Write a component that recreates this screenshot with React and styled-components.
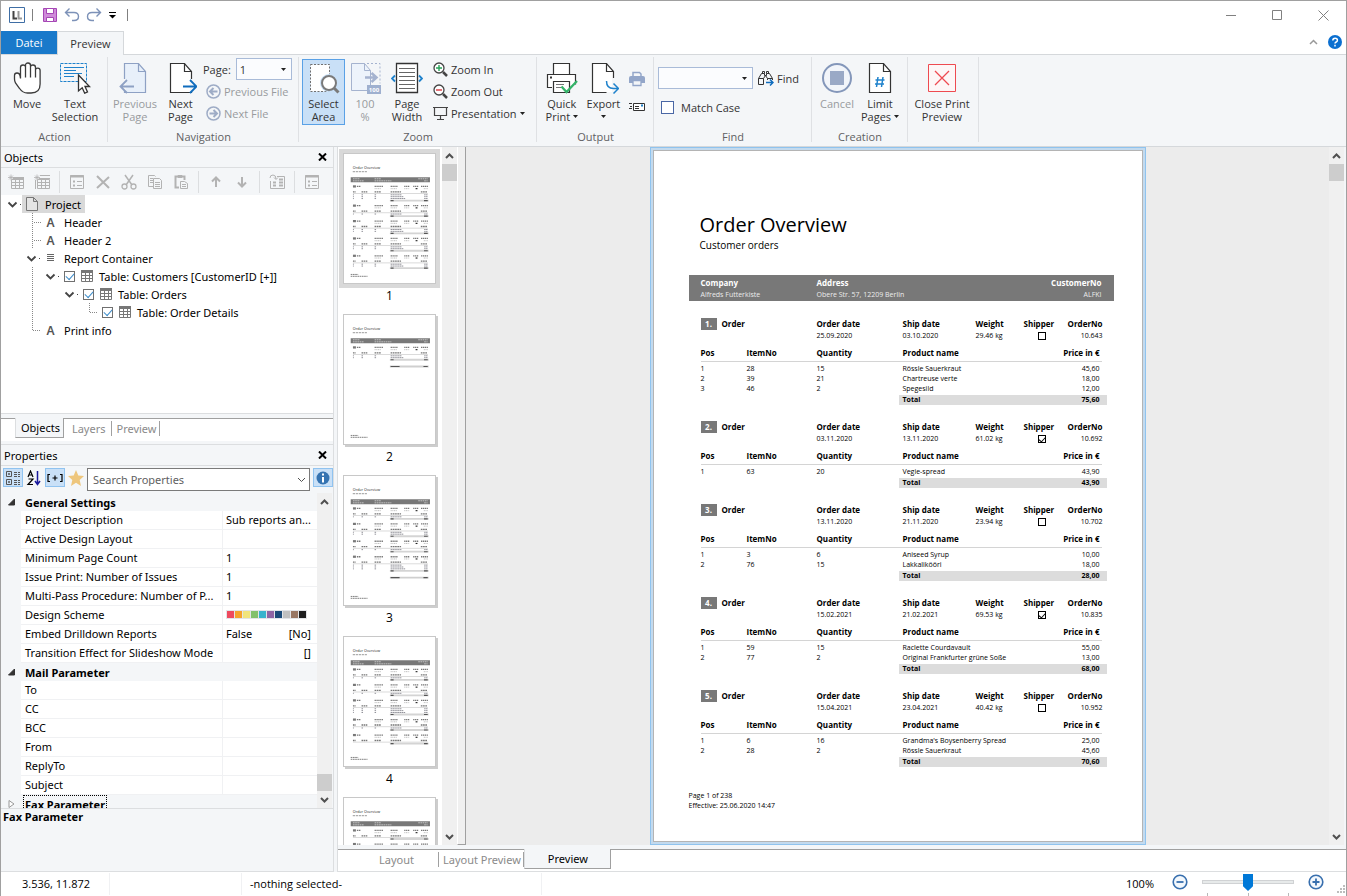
import React, { useState } from 'react';
import styled, { createGlobalStyle } from 'styled-components';

const GlobalStyle = createGlobalStyle`
  * {
    box-sizing: border-box;
  }

  body {
    margin: 0;
    background-color: white;
    color: black;
    font-family: 'Open Sans', 'Noto Sans', sans-serif;
    font-size: 11px;
    line-height: 13px;
  }

  button, input, select {
    font: inherit;
    color: inherit;
    margin: 0;
    padding: 0;
    border: none;
    background: none;
  }

  svg {
    display: block;
    flex: none;
  }
`;

const Window = styled.div`
  display: flex;
  flex-direction: column;
  height: 100vh;
  overflow: hidden;
  border: 1px solid #a0a0a0;
  border-bottom: none;
`;

/* title bar */

const TitleBar = styled.header`
  display: flex;
  align-items: center;
  flex: none;
  height: 30px;
  padding: 0 6px 2px 8px;
`;

const QuickButton = styled.button`
  display: flex;
  align-items: center;
  justify-content: center;
  width: ${props => props.$width || 22}px;
  height: 20px;
`;

const QuickSeparator = styled.div`
  width: 1px;
  height: 12px;
  margin: 0 6px 0 7px;
  background-color: #808080;
`;

const WindowButton = styled.button`
  display: flex;
  align-items: center;
  justify-content: center;
  width: 46px;
  height: 28px;
`;

const WindowButtons = styled.div`
  display: flex;
  margin-left: auto;
  margin-right: -6px;
`;

const MenuBar = styled.div`
  display: flex;
  flex: none;
  height: 24px;
  border-bottom: 1px solid #d5d8db;
`;

const FileTab = styled.button`
  width: 56px;
  background-color: #1979ca;
  color: white;
`;

const RibbonTab = styled.button`
  width: 67px;
  height: 24px;
  padding-bottom: 1px;
  background-color: #f4f6f8;
  border: 1px solid #d5d8db;
  border-bottom: none;
  color: #333;
`;

const MenuRight = styled.div`
  display: flex;
  align-items: center;
  gap: 10px;
  margin-left: auto;
  padding: 0 4px 2px 0;
`;

/* ribbon */

const Ribbon = styled.div`
  display: flex;
  flex: none;
  height: 92px;
  background-color: #f4f6f8;
  border-bottom: 1px solid #d5d8db;
`;

const Group = styled.section`
  display: flex;
  flex-direction: column;
  width: ${props => props.$width}px;
  padding: 4px 3px 0;
  position: relative;

  &::after {
    content: '';
    position: absolute;
    right: 0;
    top: 2px;
    bottom: 4px;
    width: 1px;
    background-color: #dfe1e4;
  }
`;

const GroupBody = styled.div`
  display: flex;
  height: 66px;
`;

const GroupLabel = styled.div`
  margin-top: 5px;
  text-align: center;
  color: #5f6163;
`;

const BigButton = styled.button`
  display: flex;
  flex-direction: column;
  align-items: center;
  width: ${props => props.$width}px;
  height: 66px;
  padding-top: 2px;
  border: 1px solid ${props => (props.$active ? '#5aa1e6' : 'transparent')};
  background-color: ${props => (props.$active ? '#c9e0f7' : 'transparent')};
  color: ${props => (props.disabled ? '#989b9e' : '#333')};
  white-space: nowrap;

  & > svg {
    margin-bottom: 3px;
  }
`;

const ButtonLine = styled.span`
  display: flex;
  align-items: center;
  gap: 3px;
  min-height: 13px;
`;

const SmallColumn = styled.div`
  display: flex;
  flex-direction: column;
  flex: 1;
  margin-top: -1px;
  padding-left: ${props => props.$indent || 0}px;
`;

const SmallRow = styled.div`
  display: flex;
  align-items: center;
  gap: 5px;
  height: ${props => props.$height || 22}px;
  color: #333;
`;

const SmallButton = styled.button`
  display: flex;
  align-items: center;
  gap: 3px;
  height: 22px;
  padding-left: ${props => props.$inset || 0}px;
  color: ${props => (props.disabled ? '#989b9e' : '#333')};
  white-space: nowrap;
`;

const IconColumn = styled.div`
  display: flex;
  flex-direction: column;
  align-items: center;
  justify-content: space-around;
  width: 28px;
  padding: 6px 0 4px;
`;

const SelectWrap = styled.div`
  display: flex;
  align-items: center;
  width: ${props => props.$width}px;
  height: 22px;
  border: 1px solid #a9bbd8;
  background-color: #fbfcfe;

  & > select {
    appearance: none;
    flex: 1;
    min-width: 0;
    height: 20px;
    padding-left: 3px;
  }

  & > svg {
    margin: 0 5px 0 -12px;
    pointer-events: none;
  }
`;

const MatchLabel = styled.label`
  display: flex;
  align-items: center;
  gap: 7px;
  padding-left: 3px;
  color: #333;

  & > input {
    appearance: none;
    width: 13px;
    height: 13px;
    border: 1px solid #4a67a5;
    background-color: white;
  }
`;

/* dock on the left */

const Main = styled.main`
  display: flex;
  flex: 1;
  min-height: 0;
  background-color: #f4f6f8;
`;

const Dock = styled.aside`
  display: flex;
  flex-direction: column;
  flex: none;
  width: 333px;
  border-right: 1px solid #dcdee0;
  font-family: 'Noto Sans', 'Open Sans', sans-serif;
`;

const PanelHeader = styled.div`
  display: flex;
  align-items: center;
  justify-content: space-between;
  flex: none;
  height: 21px;
  padding: 0 6px 0 3px;
  border-bottom: 1px solid #dcdee0;
`;

const ObjectToolbar = styled.div`
  display: flex;
  align-items: center;
  flex: none;
  height: 27px;
  padding-left: 2px;

  & > button {
    display: flex;
    align-items: center;
    justify-content: center;
    width: 26px;
    height: 24px;
  }

  & > hr {
    width: 1px;
    height: 22px;
    margin: 0 4px;
    border: none;
    background-color: #dcdee0;
  }
`;

const Tree = styled.div`
  flex: 1;
  min-height: 0;
  padding-left: 2px;
  border-bottom: 1px solid #dcdee0;
  background-color: white;
`;

const TreeRow = styled.div`
  display: flex;
  align-items: center;
  height: 18px;
`;

const TreeSlot = styled.div`
  display: flex;
  align-items: center;
  justify-content: center;
  flex: none;
  width: ${props => props.$width || 19}px;
  height: 18px;
`;

const TreeLabel = styled.span`
  display: flex;
  align-items: center;
  height: 18px;
  padding-right: 4px;
  background-color: ${props => (props.$selected ? '#d9d9d9' : 'transparent')};

  & > span {
    padding-left: 4px;
  }
`;

const TreeCheck = styled.input`
  appearance: none;
  display: grid;
  place-content: center;
  width: 11px;
  height: 11px;
  border: 1px solid #707070;
  background-color: white;

  &:checked::before {
    content: '';
    width: 7px;
    height: 4px;
    margin-bottom: 2px;
    border-left: 1px solid #3f8ecb;
    border-bottom: 1px solid #3f8ecb;
    transform: rotate(-48deg);
  }
`;

const DockTabs = styled.div`
  display: flex;
  flex: none;
  height: 23px;
  margin-top: 4px;
  padding-left: 14px;
  border-top: 1px solid #a0a0a0;
  background-color: white;
`;

const DockTab = styled.button`
  height: ${props => (props.$active ? 20 : 15)}px;
  margin: ${props => (props.$active ? '-1px 0 0' : '2px 0 0')};
  padding: ${props => props.$pad || '0 4px'};
  border-right: 1px solid #a0a0a0;
  color: #8a8a8a;
  white-space: nowrap;

  ${props =>
    props.$active &&
    `
    color: black;
    background-color: #f4f6f8;
    border-left: 1px solid #dcdee0;
    border-bottom: 1px solid #a0a0a0;
  `}
`;

const PropertiesPanel = styled.section`
  display: flex;
  flex-direction: column;
  flex: none;
  margin-top: 3px;
  border-top: 1px solid #dcdee0;
`;

const PropertyToolbar = styled.div`
  display: flex;
  align-items: flex-start;
  gap: 1px;
  height: 27px;
  padding: 2px 0 0 2px;
`;

const ToggleButton = styled.button`
  display: flex;
  align-items: center;
  justify-content: center;
  width: 20px;
  height: 19px;
  border: 1px solid ${props => (props.$on ? '#90c3f0' : 'transparent')};
  background-color: ${props => (props.$on ? '#c9e0f7' : 'transparent')};
`;

const SearchBox = styled.div`
  display: flex;
  align-items: center;
  flex: 1;
  height: 23px;
  margin-right: 2px;
  padding: 0 3px 0 5px;
  border: 1px solid #7a7a7a;
  background-color: white;

  & > input {
    flex: 1;
    min-width: 0;
    outline: none;
  }

  & > input::placeholder {
    color: #5f5f5f;
  }
`;

const GridArea = styled.div`
  display: flex;
  height: 316px;
  overflow: hidden;
  border-bottom: 1px solid #dcdee0;
`;

const GridClip = styled.div`
  flex: 1;
  overflow: hidden;
`;

const PropertyTable = styled.table`
  width: 100%;
  table-layout: fixed;
  border-collapse: separate;
  border-spacing: 0;

  td, th {
    height: 19px;
    padding: 0 0 2px 4px;
    text-align: left;
    overflow: hidden;
    text-overflow: ellipsis;
    white-space: nowrap;
  }

  th {
    height: 18px;
    padding-bottom: 0;
  }

  td:first-child {
    height: 18px;
    padding: 0;
  }

  td + td {
    background-color: white;
    border-bottom: 1px solid #f0f1f3;
  }

  td + td + td {
    padding-left: 3px;
    border-left: 1px solid #f0f1f3;
  }
`;

const Expander = styled.button`
  display: flex;
  justify-content: center;
  width: 20px;
`;

const Focused = styled.span`
  outline: ${props => (props.$on ? '1px dotted black' : 'none')};
  outline-offset: 1px;
`;

const Value = styled.div`
  display: flex;
  align-items: center;
  justify-content: space-between;
  padding-right: 6px;
`;

const Swatches = styled.div`
  display: flex;
  gap: 1px;
  width: max-content;
  padding: 1px;
  background-color: #e2e4e8;
`;

const Swatch = styled.div`
  width: 7px;
  height: 7px;
  background-color: ${props => props.$color};
`;

const Description = styled.div`
  height: 63px;
  padding: 1px 2px;
  border-bottom: 1px solid #dcdee0;
  font-weight: 700;
`;

/* scroll bars */

const Bar = styled.div`
  display: flex;
  flex-direction: column;
  justify-content: space-between;
  flex: none;
  width: 15px;
  margin-right: ${props => props.$margin || 0}px;
  background-color: #f0f0f0;
`;

const BarButton = styled.button`
  display: flex;
  align-items: center;
  justify-content: center;
  height: 17px;
`;

const BarThumb = styled.div`
  width: 15px;
  height: 17px;
  margin: ${props => (props.$end ? 'auto 0 0' : '0 0 auto')};
  background-color: #cdcdcd;
`;

/* centre */

const Centre = styled.div`
  display: flex;
  flex-direction: column;
  flex: 1;
  min-width: 0;
  margin-left: 3px;
  border-left: 1px solid #dcdee0;
`;

const Views = styled.div`
  display: flex;
  flex: 1;
  min-height: 0;
`;

const Thumbnails = styled.div`
  width: 104px;
  overflow: hidden;
  padding: 2px 2px 0 1px;
  background-color: white;
`;

const Thumbnail = styled.button`
  display: flex;
  flex-direction: column;
  align-items: center;
  width: 101px;
  height: 161px;
  font-size: 12px;
`;

const ThumbnailFrame = styled.div`
  width: 101px;
  height: 139px;
  margin-bottom: 1px;
  padding: 4px;
  background-color: ${props => (props.$selected ? '#d9d9d9' : 'transparent')};

  & > svg {
    background-color: white;
    border: 1px solid #c8c8c8;
    box-shadow: ${props => (props.$selected ? 'none' : '2px 2px 0 #cdcdcd')};
  }
`;

const Splitter = styled.div`
  width: 9px;
  background-color: #f0f0f0;
  border-left: 1px solid white;
  border-right: 1px solid #a0a0a0;
  border-bottom: 1px solid #a0a0a0;
`;

const Canvas = styled.div`
  display: flex;
  justify-content: center;
  flex: 1;
  min-width: 0;
  overflow: hidden;
  background-color: #ececec;
`;

const PageFrame = styled.div`
  display: flex;
  padding: 2px;
  border: 1px solid #8fc3ee;
  background-color: #c3daee;
`;

const Page = styled.article`
  display: flex;
  flex-direction: column;
  width: 490px;
  padding: 61px 27px 30px 35px;
  border: 1px solid #b4b4b4;
  background-color: white;
  font-size: 7px;
  line-height: 10px;
`;

const PageTitle = styled.h1`
  margin: 0;
  padding-left: 11px;
  font-size: 20px;
  font-weight: 400;
  line-height: 26px;
`;

const PageSubtitle = styled.p`
  margin: 0 0 23px;
  padding-left: 11px;
  font-size: 10px;
  line-height: 14px;
`;

const CustomerTable = styled.table`
  width: 425px;
  margin-bottom: 17px;
  table-layout: fixed;
  border-spacing: 0;
  background-color: #787878;
  color: #ececec;
  text-align: left;

  th {
    height: 14px;
    padding: 2px 0 0 12px;
    font-size: 8px;
    font-weight: 700;
    line-height: 12px;
    color: white;
  }

  td {
    height: 12px;
    padding: 0 0 1px 12px;
  }

  th:last-child, td:last-child {
    padding-right: 12px;
    text-align: right;
  }
`;

const Order = styled.section`
  margin: 0 0 16px 12px;
`;

const OrderTable = styled.table`
  width: ${props => props.$width}px;
  table-layout: fixed;
  border-spacing: 0;
  text-align: left;
  white-space: nowrap;

  th, td {
    height: 10px;
    padding: 0;
  }

  th {
    height: 12px;
    font-size: 8px;
    font-weight: 700;
    line-height: 12px;
  }

  td:last-child, th:last-child {
    text-align: right;
  }
`;

const ShipperCell = styled.td`
  && {
    padding-left: 14px;
  }
`;

const ReportCheck = styled(TreeCheck)`
  width: 8px;
  height: 8px;
  border-color: black;
  margin-top: 1px;

  &:checked::before {
    width: 5px;
    height: 3px;
    margin-bottom: 1px;
    border-color: black;
  }
`;

const OrderNumber = styled.span`
  display: inline-block;
  width: 16px;
  margin-right: 5px;
  background-color: #787878;
  color: white;
  text-align: center;
`;

const HeadTable = styled(OrderTable)`
  tbody td {
    height: 11px;
    line-height: 11px;
  }
`;

const ItemTable = styled(OrderTable)`
  margin-top: 6px;

  thead th {
    height: 15px;
    padding-bottom: 2px;
    border-bottom: 1px solid #d4d4d4;
  }

  thead th:last-child {
    border: none;
  }

  tbody::before {
    content: '';
    display: block;
    height: 2px;
  }

  tbody::after {
    content: '';
    display: block;
    height: 1px;
  }

  td:nth-child(4), th:nth-child(4) {
    padding-left: 4px;
  }

  td:nth-child(5), th:nth-child(5) {
    padding-right: 2px;
    text-align: right;
  }

  tfoot td {
    font-weight: 700;
  }

  tfoot td + td {
    padding-left: 4px;
    background-color: #dcdcdc;
  }

  tfoot td:last-child {
    padding-right: 7px;
  }
`;

const PageFooter = styled.footer`
  margin-top: auto;
`;

const ViewTabs = styled.div`
  display: flex;
  flex: none;
  height: 23px;
  margin-top: 4px;
  border-top: 1px solid #a0a0a0;
  border-bottom: 1px solid #dcdee0;
  background-color: white;
  font-family: 'Noto Sans', 'Open Sans', sans-serif;
`;

const StatusBar = styled.footer`
  display: flex;
  align-items: center;
  flex: none;
  height: 24px;
  background-color: white;
`;

const StatusCell = styled.div`
  width: ${props => props.$width}px;
  height: 22px;
  padding-left: ${props => props.$pad || 8}px;
  border-right: 1px solid #f0f1f3;
  line-height: 22px;
`;

const ZoomTools = styled.div`
  display: flex;
  align-items: flex-start;
  height: 24px;
  margin-left: auto;

  & > label {
    margin-right: 18px;
    line-height: 24px;
  }

  & > svg {
    align-self: flex-end;
    margin-left: 13px;
  }
`;

const ZoomButton = styled.button`
  width: 16px;
  height: 20px;
`;

const SliderBox = styled.div`
  display: flex;
  flex-direction: column;
  width: 92px;
  height: 24px;
  margin: 0 14px;
  padding-top: 1px;
`;

const Slider = styled.input`
  appearance: none;
  width: 92px;
  height: 18px;

  &::-webkit-slider-runnable-track {
    height: 4px;
    border: 1px solid #d0d2d4;
    background-color: #e7eaea;
  }

  &::-webkit-slider-thumb {
    appearance: none;
    width: 10px;
    height: 17px;
    margin-top: -7px;
    background-color: #0078d7;
    clip-path: polygon(0 0, 100% 0, 100% 72%, 50% 100%, 0 72%);
  }
`;

const Ticks = styled.div`
  display: flex;
  justify-content: space-between;
  margin-top: 2px;
  padding: 0 5px;

  & > i {
    width: 1px;
    height: 3px;
    background-color: #b8b8b8;
  }
`;

/* icons */

const Icon = ({ w = 16, h = 16, color = '#3b3b3b', children, ...rest }) => (
  <svg
    width={w}
    height={h}
    viewBox={`0 0 ${w} ${h}`}
    fill='none'
    stroke={color}
    aria-hidden='true'
    {...rest}
  >
    {children}
  </svg>
);

const Caret = () => (
  <Icon w={5} h={3}>
    <path d='M0 0h5L2.5 3z' fill='#222' stroke='none' />
  </Icon>
);

const Chevron = ({ up, color = '#505050', width = 2 }) => (
  <Icon w={9} h={6} color={color} strokeWidth={width}>
    <path d={up ? 'M1 5l3.5-3.5L8 5' : 'M1 1l3.5 3.5L8 1'} />
  </Icon>
);

const HandIcon = () => (
  <Icon w={32} h={32} strokeWidth='1.3'>
    <path
      d='M9.500 16.500V5.500q0-2.500 2.500-2.500t2.500 2V15.500V3.500q0-2.500 2.500-2.500t2.500 2.500V15.500V5q0-2 2.500-2t2.500 2.500V15.500V8q0-1.800 2.300-1.800t2.300 2.300V22q0 9-9 9h-3.500q-5 0-8-4.500L4.500 21q-1-2-1-4v-3.500q0-2.500 2.500-2.500t3 2.500z'
      fill='#fff'
    />
  </Icon>
);

const TextSelectionIcon = () => (
  <Icon w={32} h={32} color='#1f82cc'>
    <path d='M1.500 1.500h26v18h-26z' strokeDasharray='3 1' />
    <path d='M5 5.500h20M5 8.500h12M5 11.500h18M5 14.500h10' />
    <path d='M19.500 13l11 11.500h-4.500l2.500 5.500-2.800 1.200-2.500-5.500-3.700 3.200z' fill='#fff' stroke='#333' strokeWidth='1.300' />
  </Icon>
);

const PageIcon = ({ color = '#333', fill = '#fff', children }) => (
  <Icon w={32} h={32} color={color}>
    <path d='M5.500 1.500h14l7 8v21h-21z' fill={fill} strokeWidth='1.200' />
    <path d='M19.500 1.500v8h7' strokeWidth='1.200' />
    {children}
  </Icon>
);

const PreviousPageIcon = () => (
  <PageIcon color='#8ea1c4' fill='#e8f0fa'>
    <path d='M5.500 17v12' stroke='#f4f6f8' strokeWidth='3' />
    <path d='M15 24.500H2M8 18l-6.500 6.500L8 31' strokeWidth='1.800' />
  </PageIcon>
);

const NextPageIcon = () => (
  <PageIcon>
    <path d='M26.500 17v12' stroke='#f4f6f8' strokeWidth='3' />
    <path d='M18 24.500h13M25 18l6.500 6.500L25 31' stroke='#0f6cbd' strokeWidth='1.800' />
  </PageIcon>
);

const CircleArrow = ({ back }) => (
  <Icon w={15} h={15} color='#9eacc6' strokeWidth='1.500'>
    <circle cx='7.500' cy='7.500' r='6.500' />
    <path d={back ? 'M11.500 7.500H5M7.500 4L4 7.500 7.500 11' : 'M3.500 7.500H10M7.500 4L11 7.500 7.500 11'} strokeWidth='2' />
  </Icon>
);

const SelectAreaIcon = () => (
  <Icon w={32} h={32} color='#707070'>
    <path d='M2.500 2.500h19v27h-19z' fill='#fff' strokeDasharray='2 1.500' />
    <circle cx='21' cy='21' r='9' fill='#c9e0f7' stroke='none' />
    <circle cx='21' cy='21' r='7' fill='#fff' stroke='#7a7a7a' strokeWidth='2' />
    <path d='M26 26l4.500 4.500' stroke='#7a7a7a' strokeWidth='3' />
  </Icon>
);

const HundredIcon = () => (
  <Icon w={32} h={32} color='#a5b3cf'>
    <path d='M2.500 1.500h13l6 7v20h-19z' fill='#edf3fb' />
    <path d='M15.500 1.500v7h6' />
    <path d='M18 1.500h13v20' strokeDasharray='2 2' />
    <path d='M16 15.500h10M22.500 11l5 4.500-5 4.500' strokeWidth='2.500' />
    <path d='M18 23h14v9H18z' fill='#9fb0cf' stroke='none' />
    <text x='25' y='30' fontSize='6' fontWeight='700' textAnchor='middle' fill='#fff' stroke='none'>100</text>
  </Icon>
);

const PageWidthIcon = () => (
  <Icon w={32} h={32} color='#333'>
    <path d='M5.500 1.500h21v29h-21z' fill='#fff' strokeWidth='1.300' />
    <path d='M8 6.500h16M8 10.500h16M8 14.500h16M8 18.500h16M8 22.500h16M8 26.500h16' stroke='#666' />
    <path d='M4 13.500l-3 3 3 3M28 13.500l3 3-3 3' stroke='#1f82cc' strokeWidth='1.800' />
  </Icon>
);

const ZoomIcon = ({ plus }) => (
  <Icon w={15} h={15} color='#444'>
    <circle cx='6' cy='6' r='5' fill='#fff' strokeWidth='1.300' />
    <path d='M10 10l4 4' strokeWidth='2.500' />
    <path d={plus ? 'M3 6h6M6 3v6' : 'M3 6h6'} stroke={plus ? '#27a35a' : '#d9363e'} strokeWidth='1.400' />
  </Icon>
);

const PresentationIcon = () => (
  <Icon w={15} h={15} color='#444'>
    <path d='M0 1.500h15M1.500 1.500v8h12v-8M7.500 9.500v4M4 13.500h7' strokeWidth='1.200' />
  </Icon>
);

const PrinterIcon = () => (
  <Icon w={32} h={32} color='#333' strokeWidth='1.200'>
    <path d='M7.500 13V1.500h16V13' fill='#fff' />
    <path d='M6 25.500H1.500v-13h28v10' fill='#fff' />
    <path d='M4 15.500h2' strokeWidth='2' />
    <path d='M7.500 19.500h16v11h-16z' fill='#fff' />
    <path d='M10 22.500h8M10 25.500h5' stroke='#777' />
    <path d='M15.500 24.500l5 5.500L31 19' stroke='#35b56a' strokeWidth='2.300' />
  </Icon>
);

const ExportIcon = () => (
  <PageIcon>
    <path d='M26.500 16v15.500h-7' stroke='#f4f6f8' strokeWidth='3' />
    <path d='M19.500 19q0 7.500 7 7.500h4.500M26.500 21.500l5 5-5 5' stroke='#1f82cc' strokeWidth='1.500' />
  </PageIcon>
);

const SmallPrinterIcon = () => (
  <Icon w={16} h={16} color='#93a6c9'>
    <path d='M4 6V1.500h6.500l1.500 1.500v3' strokeWidth='1.500' />
    <path d='M2 5h12q2 0 2 2v5H0V7q0-2 2-2z' fill='#93a6c9' stroke='none' />
    <path d='M4 9.500h8v5H4z' fill='#f4f6f8' strokeWidth='1.300' />
  </Icon>
);

const MailIcon = () => (
  <Icon w={16} h={10} color='#333'>
    <path d='M4.500 1.500h11v7h-11z' fill='#fff' />
    <path d='M0 1.500h3M1 4.500h2M0 6.500h3M6 4.500h4M6 6.500h4' />
    <path d='M12 3.500h2' stroke='#1f82cc' strokeWidth='2' />
  </Icon>
);

const BinocularsIcon = () => (
  <Icon w={16} h={16} color='#333'>
    <path d='M.5 14.500V8.500L3.500 3.500h3v2h2v-2h3l3 5M4.500 3.500v-2h2v2M8.500 3.500v-2h2v2M.5 8.500h5v6h-5M5.500 8.500l2-3 2 3M9.500 10v-1.500h5V10' />
    <path d='M8 12.500h7M12 9.500l3 3-3 3' stroke='#0f6cbd' strokeWidth='1.500' />
  </Icon>
);

const StopIcon = () => (
  <Icon w={32} h={32} color='#8497ba'>
    <circle cx='16' cy='16' r='14' fill='#f2f5fa' strokeWidth='2' />
    <path d='M9 9h14v14H9z' fill='#9aa9c6' stroke='none' />
  </Icon>
);

const LimitIcon = () => (
  <PageIcon>
    <path d='M14 15l-1.500 10M19 15l-1.500 10M11.500 18h9M11 22h9' stroke='#1f82cc' strokeWidth='1.500' />
  </PageIcon>
);

const CloseRedIcon = () => (
  <Icon w={32} h={32} color='#ee4a50'>
    <path d='M2.500 2.500h27v27h-27z' fill='#fdf6f6' />
    <path d='M9 9l14 14M23 9L9 23' strokeWidth='1.300' />
  </Icon>
);

const GRAY = '#b3b3b3';

const TableGlyph = ({ color = '#777' }) => (
  <Icon w={13} h={12} color={color}>
    <path d='M.5 1.500h11v10H.5zM.5 5.500h11M.5 8.500h11M4.500 3v8M8.500 3v8' />
    <path d='M0 1.500h12' strokeWidth='3' />
  </Icon>
);

const NewTableIcon = ({ double }) => (
  <Icon color={GRAY}>
    <path d='M3.500 5.500h12v9h-12zM3.500 8.500h12M3.500 11.500h12M7.500 6v8M11.500 6v8' />
    <path d='M5 4.500h11' strokeWidth={double ? 1 : 3} />
    {double && <path d='M6 1.500h10M1.500 6v9' />}
    <path d='M0 3.500h6M3 .5v6M1 1.500l4 4M5 1.500l-4 4' strokeWidth='.8' />
  </Icon>
);

const PropertiesIcon = () => (
  <Icon color={GRAY}>
    <path d='M1.500 1.500h13v13h-13z' />
    <path d='M1 2.500h14' strokeWidth='2' />
    <path d='M4 7.500h2M4 11.500h2' strokeWidth='2' />
    <path d='M8 7.500h5M8 11.500h5' />
  </Icon>
);

const DeleteIcon = () => (
  <Icon color={GRAY}>
    <path d='M2 2l12 12M14 3L2 14' strokeWidth='2' />
  </Icon>
);

const ScissorsIcon = () => (
  <Icon color={GRAY} strokeWidth='1.300'>
    <path d='M4 1l7 10M12 1L5 11' strokeWidth='1.500' />
    <circle cx='3.500' cy='12.500' r='2.500' />
    <circle cx='12.500' cy='12.500' r='2.500' />
  </Icon>
);

const CopyIcon = () => (
  <Icon color={GRAY}>
    <path d='M6 12.500H1.500v-11h6l1 1M3 4.500h3M3 6.500h3M3 8.500h3' />
    <path d='M6.500 4.500h6l2 2v8h-8zM8 8.500h5M8 10.500h5M8 12.500h5' />
  </Icon>
);

const PasteIcon = () => (
  <Icon color={GRAY}>
    <path d='M6 13.500H2.500v-11h9V6' strokeWidth='2' />
    <path d='M5 1.500h4v2H5z' />
    <path d='M7.500 7.500h4l3 2v5h-7zM9 10.500h4M9 12.500h4' fill='#f4f6f8' />
  </Icon>
);

const ArrowIcon = ({ down }) => (
  <Icon color={GRAY} strokeWidth='2'>
    <path d={down ? 'M8 3v9M4 8.500l4 4 4-4' : 'M8 13V4M4 7.500l4-4 4 4'} />
  </Icon>
);

const ReplaceIcon = () => (
  <Icon color={GRAY}>
    <path d='M1 4q0-3 3-3t3 4M5 3.500l2 2 2-2M8 2.500h7.500v12H1.500V7' />
    <path d='M4 8.500h3M4 11.500h3M10 8.500h4M10 5.500h4M10 11.500h4' strokeWidth='2' />
  </Icon>
);

const DocIcon = () => (
  <Icon w={12} h={14} color='#777'>
    <path d='M.5 .5h7l4 4v9H.5zM7.500 .5v4h4' fill='#fff' fillOpacity='.3' />
  </Icon>
);

const LetterA = styled.span`
  font-size: 12px;
  font-weight: 600;
  color: #555;
`;

const LinesIcon = () => (
  <Icon w={7} h={8} color='#666'>
    <path d='M0 .5h7M0 2.500h7M0 4.500h7M0 6.500h7' />
  </Icon>
);

const CrossIcon = () => (
  <Icon w={9} h={8} color='black'>
    <path d='M1 .5l7 7M8 .5l-7 7' strokeWidth='2' />
  </Icon>
);

const CategoryIcon = () => (
  <Icon color='#555'>
    <path d='M1.500 1.500h5v5h-5zM1.500 9.500h5v5h-5zM3 4h2M4 3v2M3 12h2M4 11v2' />
    <path d='M9 2.500h3M9 4.500h3M9 6.500h3M9 10.500h3M9 12.500h3M9 14.500h3M13 2.500h2M13 4.500h2M13 6.500h2M13 10.500h2M13 12.500h2M13 14.500h2' />
  </Icon>
);

const SortIcon = () => (
  <Icon color='black' strokeWidth='1.200'>
    <path d='M2 7l2.500-6L7 7M3 5h3M2.500 9h4.500l-5 5.500H7' />
    <path d='M11.500 1v13M9 11l2.500 3.500L14 11' stroke='#1a1a9c' strokeWidth='1.500' />
  </Icon>
);

const PlusBracketIcon = () => (
  <Icon w={16} h={10} color='black' strokeWidth='1.200'>
    <path d='M3 1.500H1v7h2M13 1.500h2v7h-2M5.500 5h5M8 2.500v5' />
  </Icon>
);

const StarIcon = () => (
  <Icon>
    <path d='M8 0l2.300 5.500 5.700.5-4.300 4 1.300 6-5-3.300L3 16l1.300-6L0 6l5.700-.5z' fill='#eec67c' stroke='none' />
  </Icon>
);

const InfoIcon = () => (
  <Icon w={14} h={14}>
    <circle cx='7' cy='7' r='6.500' fill='#3573b1' stroke='none' />
    <path d='M7 2.500v2M7 6v5.500' stroke='white' strokeWidth='2' />
  </Icon>
);

const RoundSign = ({ plus }) => (
  <Icon color='#386fae'>
    <circle cx='8' cy='8' r='6.800' strokeWidth='1.600' fill='#f3f8fd' />
    <path d={plus ? 'M4.500 8h7M8 4.500v7' : 'M4.500 8h7'} strokeWidth='1.800' />
  </Icon>
);

const GripIcon = () => (
  <Icon w={9} h={12} color='#bdbdbd' strokeWidth='2' strokeDasharray='2 1'>
    <path d='M6 2h2M3 5h5M0 8h8' />
  </Icon>
);

/* title bar and ribbon */

const Titles = () => (
  <TitleBar>
    <Icon w={16} h={16} color='#3f6ea5'>
      <path d='M.5 .5h15v15H.5z' />
      <path d='M4.500 4v7.500H8' strokeWidth='2' stroke='#444' />
      <path d='M9.500 4v7.500H13' strokeWidth='2' stroke='#999' />
    </Icon>
    <QuickSeparator />
    <QuickButton aria-label='Save'>
      <Icon w={14} h={14} color='#a546b5'>
        <path d='M.5 .5h13v13H.5z' fill='#cf8bd9' />
        <path d='M3.500 .5h7v5h-7z' fill='#fff' />
        <path d='M3.500 9.500h7v4h-7z' fill='#fff' />
      </Icon>
    </QuickButton>
    <QuickButton aria-label='Undo'>
      <Icon color='#7d92b8' strokeWidth='1.400'>
        <path d='M5.500 1.500L1.500 5.500l4 4M1.500 5.500H10q4.500 0 4.500 4t-4.500 4H8' />
      </Icon>
    </QuickButton>
    <QuickButton aria-label='Redo'>
      <Icon color='#7d92b8' strokeWidth='1.400'>
        <path d='M10.500 1.500l4 4-4 4M14.500 5.500H6q-4.500 0-4.500 4t4.500 4h2' />
      </Icon>
    </QuickButton>
    <QuickButton $width={15} aria-label='Customize'>
      <Icon w={7} h={7} color='black'>
        <path d='M0 .5h7' />
        <path d='M0 3h7L3.500 6.500z' fill='black' stroke='none' />
      </Icon>
    </QuickButton>
    <QuickSeparator />
    <WindowButtons>
      <WindowButton aria-label='Minimize'>
        <Icon w={11} h={11} color='#808080'><path d='M0 5.500h10' /></Icon>
      </WindowButton>
      <WindowButton aria-label='Maximize'>
        <Icon w={11} h={11} color='#808080'><path d='M.5 .5h9v9h-9z' /></Icon>
      </WindowButton>
      <WindowButton aria-label='Close'>
        <Icon w={11} h={11} color='#808080'><path d='M.5 .5l10 10M10.500 .5l-10 10' /></Icon>
      </WindowButton>
    </WindowButtons>
  </TitleBar>
);

const Menu = () => (
  <MenuBar>
    <FileTab>Datei</FileTab>
    <RibbonTab>Preview</RibbonTab>
    <MenuRight>
      <Chevron up color='#999' width={1.5} />
      <Icon w={14} h={14}>
        <circle cx='7' cy='7' r='7' fill='#0b6fd0' stroke='none' />
        <path d='M4.800 5.500q0-2.300 2.300-2.300t2.300 2q0 1.200-1.200 1.800T7 8.500M7 9.800v1.600' stroke='white' strokeWidth='1.500' />
      </Icon>
    </MenuRight>
  </MenuBar>
);

const Big = ({ width, icon, lines, drop, ...rest }) => (
  <BigButton $width={width} {...rest}>
    {icon}
    {lines.map((line, idx) => (
      <ButtonLine key={idx}>
        {line}
        {drop && idx === lines.length - 1 && <Caret />}
      </ButtonLine>
    ))}
  </BigButton>
);

const RibbonBar = () => {
  const [matchCase, setMatchCase] = useState(false);
  return (
    <Ribbon>
      <Group $width={107}>
        <GroupBody>
          <Big width={46} icon={<HandIcon />} lines={['Move']} />
          <Big width={50} icon={<TextSelectionIcon />} lines={['Text', 'Selection']} />
        </GroupBody>
        <GroupLabel>Action</GroupLabel>
      </Group>
      <Group $width={191}>
        <GroupBody>
          <Big width={48} icon={<PreviousPageIcon />} lines={['Previous', 'Page']} disabled />
          <Big width={43} icon={<NextPageIcon />} lines={['Next', 'Page']} />
          <SmallColumn $indent={1}>
            <SmallRow>
              <label htmlFor='page'>Page:</label>
              <SelectWrap $width={56}>
                <select id='page' defaultValue='1'>
                  <option>1</option>
                  <option>2</option>
                </select>
                <Caret />
              </SelectWrap>
            </SmallRow>
            <SmallButton $inset={3} disabled><CircleArrow back />Previous File</SmallButton>
            <SmallButton $inset={3} disabled><CircleArrow />Next File</SmallButton>
          </SmallColumn>
        </GroupBody>
        <GroupLabel>Navigation</GroupLabel>
      </Group>
      <Group $width={238}>
        <GroupBody>
          <Big width={43} icon={<SelectAreaIcon />} lines={['Select', 'Area']} $active />
          <Big width={40} icon={<HundredIcon />} lines={['100', '%']} disabled />
          <Big width={44} icon={<PageWidthIcon />} lines={['Page', 'Width']} />
          <SmallColumn $indent={4}>
            <SmallButton><ZoomIcon plus />Zoom In</SmallButton>
            <SmallButton><ZoomIcon />Zoom Out</SmallButton>
            <SmallButton><PresentationIcon />Presentation <Caret /></SmallButton>
          </SmallColumn>
        </GroupBody>
        <GroupLabel>Zoom</GroupLabel>
      </Group>
      <Group $width={117}>
        <GroupBody>
          <Big width={44} icon={<PrinterIcon />} lines={['Quick', 'Print']} drop />
          <Big width={40} icon={<ExportIcon />} lines={['Export', '']} drop />
          <IconColumn>
            <QuickButton aria-label='Print'><SmallPrinterIcon /></QuickButton>
            <QuickButton aria-label='Send'><MailIcon /></QuickButton>
          </IconColumn>
        </GroupBody>
        <GroupLabel>Output</GroupLabel>
      </Group>
      <Group $width={158}>
        <GroupBody>
          <SmallColumn $indent={1}>
            <SmallRow $height={40}>
              <SelectWrap $width={95}>
                <select aria-label='Search text'>
                  <option />
                </select>
                <Caret />
              </SelectWrap>
              <SmallButton><BinocularsIcon />Find</SmallButton>
            </SmallRow>
            <SmallRow $height={18}>
              <MatchLabel>
                <input
                  type='checkbox'
                  checked={matchCase}
                  onChange={() => setMatchCase(!matchCase)}
                />
                Match Case
              </MatchLabel>
            </SmallRow>
          </SmallColumn>
        </GroupBody>
        <GroupLabel>Find</GroupLabel>
      </Group>
      <Group $width={96}>
        <GroupBody>
          <Big width={44} icon={<StopIcon />} lines={['Cancel']} disabled />
          <Big width={42} icon={<LimitIcon />} lines={['Limit', 'Pages']} drop />
        </GroupBody>
        <GroupLabel>Creation</GroupLabel>
      </Group>
      <Group $width={71}>
        <GroupBody>
          <Big width={62} icon={<CloseRedIcon />} lines={['Close Print', 'Preview']} />
        </GroupBody>
      </Group>
    </Ribbon>
  );
};

/* object tree: guides lists what stands in each indent slot */

const objects = [
  { name: 'Project', guides: ['open'], icon: 'doc', selected: true },
  { name: 'Header', guides: ['', 'tee'], icon: 'text' },
  { name: 'Header 2', guides: ['', 'tee'], icon: 'text' },
  { name: 'Report Container', guides: ['', 'open'], icon: 'lines' },
  { name: 'Table: Customers [CustomerID [+]]', guides: ['', 'line', 'open'], icon: 'table', check: true },
  { name: 'Table: Orders', guides: ['', 'line', '', 'open'], icon: 'table', check: true },
  { name: 'Table: Order Details', guides: ['', 'line', '', '', 'end'], icon: 'table', check: true },
  { name: 'Print info', guides: ['', 'end'], icon: 'text' },
];

const guidePaths = {
  tee: 'M10.500 0v18M12 9.500h7',
  line: 'M10.500 0v18',
  end: 'M10.500 0v9.500h8.500',
};

const objectIcons = {
  doc: <DocIcon />,
  text: <LetterA>A</LetterA>,
  lines: <LinesIcon />,
  table: <TableGlyph />,
};

const Guide = ({ kind }) => (
  <TreeSlot>
    {kind === 'open' && (
      <Icon w={19} h={18} color='#444'>
        <path d='M5.500 7.500l4 4 4-4' strokeWidth='1.800' />
        <path d='M17 9.500h2' strokeDasharray='1 1' />
      </Icon>
    )}
    {guidePaths[kind] && (
      <Icon w={19} h={18} color='#888' strokeDasharray='1 1'>
        <path d={guidePaths[kind]} />
      </Icon>
    )}
  </TreeSlot>
);

const ObjectsPanel = () => (
  <>
    <PanelHeader>
      Objects
      <button aria-label='Close objects'><CrossIcon /></button>
    </PanelHeader>
    <ObjectToolbar>
      <button aria-label='Append element'><NewTableIcon /></button>
      <button aria-label='Append sub-element'><NewTableIcon double /></button>
      <hr />
      <button aria-label='Edit'><PropertiesIcon /></button>
      <button aria-label='Delete'><DeleteIcon /></button>
      <button aria-label='Cut'><ScissorsIcon /></button>
      <button aria-label='Copy'><CopyIcon /></button>
      <button aria-label='Paste'><PasteIcon /></button>
      <hr />
      <button aria-label='Move up'><ArrowIcon /></button>
      <button aria-label='Move down'><ArrowIcon down /></button>
      <hr />
      <button aria-label='Replace'><ReplaceIcon /></button>
      <hr />
      <button aria-label='Properties'><PropertiesIcon /></button>
    </ObjectToolbar>
    <Tree>
      {objects.map(object => (
        <TreeRow key={object.name}>
          {object.guides.map((kind, idx) => (
            <Guide key={idx} kind={kind} />
          ))}
          {object.check && (
            <TreeSlot>
              <TreeCheck type='checkbox' defaultChecked aria-label={object.name} />
            </TreeSlot>
          )}
          <TreeLabel $selected={object.selected}>
            <TreeSlot $width={object.check ? 16 : 19}>{objectIcons[object.icon]}</TreeSlot>
            <span>{object.name}</span>
          </TreeLabel>
        </TreeRow>
      ))}
    </Tree>
    <DockTabs>
      <DockTab $active $pad='0 3px 0 5px'>Objects</DockTab>
      <DockTab $pad='0 6px 0 8px'>Layers</DockTab>
      <DockTab $pad='0 2px 0 4px'>Preview</DockTab>
    </DockTabs>
  </>
);

const scheme = [
  '#ee4a5e', '#f5a32c', '#f1e47c', '#82c06c', '#38b3cd',
  '#8f65a4', '#1b4a78', '#c0c0c0', '#987663', '#1e1e1e',
];

const properties = [
  { group: 'General Settings' },
  { name: 'Project Description', value: 'Sub reports an...' },
  { name: 'Active Design Layout' },
  { name: 'Minimum Page Count', value: '1' },
  { name: 'Issue Print: Number of Issues', value: '1' },
  { name: 'Multi-Pass Procedure: Number of P...', value: '1' },
  { name: 'Design Scheme', colors: scheme },
  { name: 'Embed Drilldown Reports', value: 'False', extra: '[No]' },
  { name: 'Transition Effect for Slideshow Mode', extra: '[]' },
  { group: 'Mail Parameter' },
  { name: 'To' },
  { name: 'CC' },
  { name: 'BCC' },
  { name: 'From' },
  { name: 'ReplyTo' },
  { name: 'Subject' },
  { group: 'Fax Parameter', closed: true },
];

const ScrollBar = ({ end, margin }) => (
  <Bar $margin={margin}>
    <BarButton aria-label='Scroll up'><Chevron up /></BarButton>
    <BarThumb $end={end} />
    <BarButton aria-label='Scroll down'><Chevron /></BarButton>
  </Bar>
);

const PropertyRow = ({ row }) => {
  if (row.group) {
    return (
      <tr>
        <td>
          <Expander aria-label={row.group}>
            <Icon w={7} h={8} color={row.closed ? '#999' : '#333'}>
              <path d={row.closed ? 'M1 .5l5 3.500-5 3.500z' : 'M6.500 1v6h-6z'} fill={row.closed ? '#fff' : '#333'} />
            </Icon>
          </Expander>
        </td>
        <th colSpan='2'><Focused $on={row.closed}>{row.group}</Focused></th>
      </tr>
    );
  }
  return (
    <tr>
      <td />
      <td>{row.name}</td>
      <td>
        <Value>
          {row.colors ? (
            <Swatches>
              {row.colors.map(color => <Swatch key={color} $color={color} />)}
            </Swatches>
          ) : (
            <span>{row.value}</span>
          )}
          <span>{row.extra}</span>
        </Value>
      </td>
    </tr>
  );
};

const Columns = ({ widths }) => (
  <colgroup>
    {widths.map((width, idx) => <col key={idx} width={width} />)}
  </colgroup>
);

const Properties = () => (
  <PropertiesPanel>
    <PanelHeader>
      Properties
      <button aria-label='Close properties'><CrossIcon /></button>
    </PanelHeader>
    <PropertyToolbar>
      <ToggleButton $on aria-label='By category'><CategoryIcon /></ToggleButton>
      <ToggleButton aria-label='Sort'><SortIcon /></ToggleButton>
      <ToggleButton $on aria-label='Expand all'><PlusBracketIcon /></ToggleButton>
      <ToggleButton aria-label='Favorites'><StarIcon /></ToggleButton>
      <SearchBox>
        <input type='text' placeholder='Search Properties' aria-label='Search Properties' />
        <button aria-label='Recent searches'><Chevron width={1} /></button>
      </SearchBox>
      <ToggleButton $on aria-label='Information'><InfoIcon /></ToggleButton>
    </PropertyToolbar>
    <GridArea>
      <GridClip>
        <PropertyTable>
          <Columns widths={[20, undefined, 95]} />
          <tbody>
            {properties.map(row => (
              <PropertyRow key={row.group || row.name} row={row} />
            ))}
          </tbody>
        </PropertyTable>
      </GridClip>
      <ScrollBar end margin={1} />
    </GridArea>
    <Description>Fax Parameter</Description>
  </PropertiesPanel>
);

/* miniature pages, drawn in the page's own units */

const miniatures = [
  { items: [3, 1, 2, 2, 2] },
  { items: [2], sum: true },
  { items: [1, 2, 1, 3], sum: true },
  { items: [1, 1, 3, 1, 0] },
  { items: [0, 1, 2, 2, 1] },
];

const MiniOrder = ({ y, count }) => (
  <g>
    <path d={`M48 ${y}h16v12h-16z`} fill='#787878' />
    <g stroke='#777' strokeWidth='7'>
      <path d={`M69 ${y + 6}h22M164 ${y + 6}h45M250 ${y + 6}h37M323 ${y + 6}h29M371 ${y + 6}h30M413 ${y + 6}h37`} strokeDasharray='7 3' />
      <path d={`M48 ${y + 35}h15M94 ${y + 35}h31M164 ${y + 35}h35M250 ${y + 35}h56M412 ${y + 35}h36`} strokeDasharray='9 3' />
    </g>
    <path d={`M164 ${y + 18}h36M250 ${y + 18}h36M323 ${y + 18}h28M428 ${y + 18}h22`} stroke='#bbb' strokeWidth='5' strokeDasharray='6 3' />
    <path d={`M384 ${y + 18}h10`} stroke='#222' strokeWidth='6' />
    <path d={`M48 ${y + 44}h402`} stroke='#cfcfcf' strokeWidth='4' />
    {Array.from({ length: count }, (_, idx) => (
      <path
        key={idx}
        d={`M48 ${y + 51 + idx * 10}h5M94 ${y + 51 + idx * 10}h8M164 ${y + 51 + idx * 10}h8M250 ${y + 51 + idx * 10}h${60 + idx * 9}M430 ${y + 51 + idx * 10}h18`}
        stroke='#8a8a92'
        strokeWidth='5'
        strokeDasharray='8 2'
      />
    ))}
    <path d={`M246 ${y + 82 - 30 + count * 10}h208`} stroke='#d4d4d4' strokeWidth='10' />
    <path d={`M250 ${y + 82 - 30 + count * 10}h16M429 ${y + 82 - 30 + count * 10}h20`} stroke='#555' strokeWidth='6' />
  </g>
);

const Miniature = ({ items, sum }) => {
  const tops = items.map((_, idx) =>
    items.slice(0, idx).reduce((y, count) => y + 73 + count * 10, 166)
  );
  const last = tops[tops.length - 1] + 52 + items[items.length - 1] * 10;
  return (
    <svg width='93' height='131' viewBox='0 0 488 688' fill='none' aria-hidden='true'>
      <text x='47' y='80' fontSize='20' fill='#222'>Order Overview</text>
      <path d='M47 93h78' stroke='#777' strokeWidth='4' strokeDasharray='12 4' />
      <path d='M36 123h425v26H36z' fill='#787878' />
      <path d='M48 131h38M164 131h33M398 131h51M48 142h60M164 142h90M430 142h18' stroke='#c8c8c8' strokeWidth='5' strokeDasharray='9 3' />
      {items.map((count, idx) => (
        <MiniOrder key={idx} y={tops[idx]} count={count} />
      ))}
      {sum && <path d={`M246 ${last + 36}h208`} stroke='#cfcfcf' strokeWidth='10' />}
      {sum && <path d={`M250 ${last + 36}h48M426 ${last + 36}h23`} stroke='#555' strokeWidth='6' />}
      <path d='M36 644h40M36 654h90' stroke='#777' strokeWidth='5' strokeDasharray='9 3' />
    </svg>
  );
};

/* report page */

const orders = [
  {
    date: '25.09.2020', ship: '03.10.2020', weight: '29.46 kg', shipper: false, no: '10.643', total: '75,60',
    items: [
      ['1', '28', '15', 'Rössle Sauerkraut', '45,60'],
      ['2', '39', '21', 'Chartreuse verte', '18,00'],
      ['3', '46', '2', 'Spegesild', '12,00'],
    ],
  },
  {
    date: '03.11.2020', ship: '13.11.2020', weight: '61.02 kg', shipper: true, no: '10.692', total: '43,90',
    items: [['1', '63', '20', 'Vegie-spread', '43,90']],
  },
  {
    date: '13.11.2020', ship: '21.11.2020', weight: '23.94 kg', shipper: false, no: '10.702', total: '28,00',
    items: [
      ['1', '3', '6', 'Aniseed Syrup', '10,00'],
      ['2', '76', '15', 'Lakkalikööri', '18,00'],
    ],
  },
  {
    date: '15.02.2021', ship: '21.02.2021', weight: '69.53 kg', shipper: true, no: '10.835', total: '68,00',
    items: [
      ['1', '59', '15', 'Raclette Courdavault', '55,00'],
      ['2', '77', '2', 'Original Frankfurter grüne Soße', '13,00'],
    ],
  },
  {
    date: '15.04.2021', ship: '23.04.2021', weight: '40.42 kg', shipper: false, no: '10.952', total: '70,60',
    items: [
      ['1', '6', '16', "Grandma's Boysenberry Spread", '25,00'],
      ['2', '28', '2', 'Rössle Sauerkraut', '45,60'],
    ],
  },
];

const OrderBlock = ({ order, number }) => (
  <Order>
    <HeadTable $width={402}>
      <Columns widths={[116, 86, 73, 48, 38, 41]} />
      <thead>
        <tr>
          <th><OrderNumber>{number}.</OrderNumber>Order</th>
          <th>Order date</th>
          <th>Ship date</th>
          <th>Weight</th>
          <th>Shipper</th>
          <th>OrderNo</th>
        </tr>
      </thead>
      <tbody>
        <tr>
          <td />
          <td>{order.date}</td>
          <td>{order.ship}</td>
          <td>{order.weight}</td>
          <ShipperCell>
            <ReportCheck type='checkbox' checked={order.shipper} readOnly aria-label='Shipper' />
          </ShipperCell>
          <td>{order.no}</td>
        </tr>
      </tbody>
    </HeadTable>
    <ItemTable $width={406}>
      <Columns widths={[46, 70, 82, 154, 49, 5]} />
      <thead>
        <tr>
          <th>Pos</th>
          <th>ItemNo</th>
          <th>Quantity</th>
          <th>Product name</th>
          <th>Price in €</th>
          <th />
        </tr>
      </thead>
      <tbody>
        {order.items.map(item => (
          <tr key={item[0]}>
            {item.map((cell, idx) => <td key={idx}>{cell}</td>)}
            <td />
          </tr>
        ))}
      </tbody>
      <tfoot>
        <tr>
          <td colSpan='3' />
          <td>Total</td>
          <td colSpan='2'>{order.total}</td>
        </tr>
      </tfoot>
    </ItemTable>
  </Order>
);

const Report = () => (
  <Page>
    <PageTitle>Order Overview</PageTitle>
    <PageSubtitle>Customer orders</PageSubtitle>
    <CustomerTable>
      <Columns widths={[116, 208, 101]} />
      <thead>
        <tr>
          <th>Company</th>
          <th>Address</th>
          <th>CustomerNo</th>
        </tr>
      </thead>
      <tbody>
        <tr>
          <td>Alfreds Futterkiste</td>
          <td>Obere Str. 57, 12209 Berlin</td>
          <td>ALFKI</td>
        </tr>
      </tbody>
    </CustomerTable>
    {orders.map((order, idx) => (
      <OrderBlock key={order.no} order={order} number={idx + 1} />
    ))}
    <PageFooter>
      Page 1 of 238
      <br />
      Effective: 25.06.2020 14:47
    </PageFooter>
  </Page>
);

const App = () => {
  const [page, setPage] = useState(1);
  const [zoom, setZoom] = useState(100);
  return (
    <Window>
      <GlobalStyle />
      <Titles />
      <Menu />
      <RibbonBar />
      <Main>
        <Dock>
          <ObjectsPanel />
          <Properties />
        </Dock>
        <Centre>
          <Views>
            <Thumbnails>
              {miniatures.map((mini, idx) => (
                <Thumbnail key={idx} onClick={() => setPage(idx + 1)}>
                  <ThumbnailFrame $selected={page === idx + 1}>
                    <Miniature {...mini} />
                  </ThumbnailFrame>
                  {idx + 1}
                </Thumbnail>
              ))}
            </Thumbnails>
            <ScrollBar />
            <Splitter />
            <Canvas>
              <PageFrame>
                <Report />
              </PageFrame>
            </Canvas>
            <ScrollBar margin={2} />
          </Views>
          <ViewTabs>
            <DockTab $pad='0 24px 0 41px'>Layout</DockTab>
            <DockTab $pad='0 2px 0 4px'>Layout Preview</DockTab>
            <DockTab $active $pad='0 22px 0 23px'>Preview</DockTab>
          </ViewTabs>
        </Centre>
      </Main>
      <StatusBar>
        <StatusCell $width={109} $pad={21}>3.536, 11.872</StatusCell>
        <StatusCell $width={132} />
        <StatusCell $width={300}>-nothing selected-</StatusCell>
        <ZoomTools>
          <label htmlFor='zoom'>{zoom}%</label>
          <ZoomButton aria-label='Zoom out' onClick={() => setZoom(zoom - 10)}>
            <RoundSign />
          </ZoomButton>
          <SliderBox>
            <Slider
              id='zoom'
              type='range'
              min='0'
              max='200'
              value={zoom}
              onChange={e => setZoom(Number(e.target.value))}
            />
            <Ticks><i /><i /><i /></Ticks>
          </SliderBox>
          <ZoomButton aria-label='Zoom in' onClick={() => setZoom(zoom + 10)}>
            <RoundSign plus />
          </ZoomButton>
          <GripIcon />
        </ZoomTools>
      </StatusBar>
    </Window>
  );
};

export default App;
